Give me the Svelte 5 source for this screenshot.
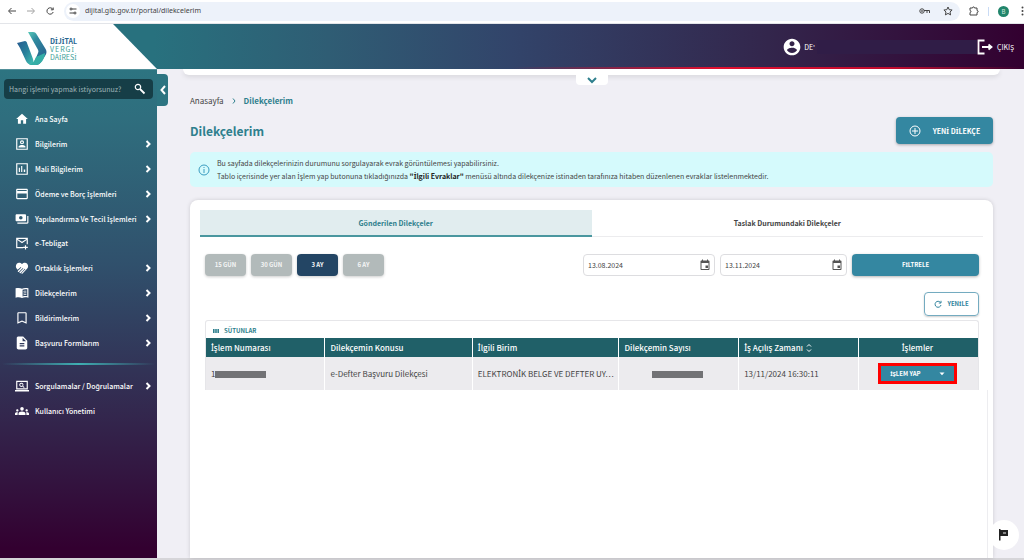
<script lang="ts">
  type Item = { label: string; icon: string; more?: boolean };

  const icons: Record<string, string> = {
    home: 'M10 20v-6h4v6h5v-8h3L12 3 2 12h3v8z',
    person: 'M2 2h20v20H2zM4 4v16h16V4zM12 5.500a3.500 3.500 0 1 1 0 7 3.500 3.500 0 0 1 0-7zM6 18v-1.500c0-2 4-3 6-3s6 1 6 3V18zM12 7.500a1.500 1.500 0 1 0 0 3 1.500 1.500 0 0 0 0-3z',
    chart: 'M2 2h20v20H2zM4 4v16h16V4zM6.500 10h2v7h-2zM10.500 7h2v10h-2zM15 13h2.500v4H15z',
    card: 'M20 3H4C2.900 3 2 3.900 2 5v14c0 1.100.9 2 2 2h16c1.100 0 2-.9 2-2V5c0-1.100-.9-2-2-2zm0 16H4v-8h16v8zm0-12H4V5h16v2z',
    cash: 'M19 14V6c0-1.100-.9-2-2-2H3c-1.100 0-2 .9-2 2v8c0 1.100.9 2 2 2h14c1.100 0 2-.9 2-2zm-9-1c-1.660 0-3-1.340-3-3s1.340-3 3-3 3 1.340 3 3-1.340 3-3 3zm13-6v11c0 1.100-.9 2-2 2H4v-2h17V7h2z',
    mail: 'M2 3h20v11h-2V7l-8 5.500L4 7v12h10v2H2zM4.500 5l7.500 5 7.500-5zM17 16h2v2.500h3v2h-3V23h-2v-2.500h-3v-2h3z',
    hands: 'M7 3c2 0 3.300.7 5 2.200C13.700 3.700 15 3 17 3c3 0 5.500 2.700 5.500 6 0 1.500-.5 2.800-1.500 4l-8 8.500c-.8.8-2 .5-2.300-.3l7-7-.8-.8-7.400 7.400c-.8.5-2-.2-2-1.300l6.800-6.800-.8-.8-7 7c-1 .3-2-.6-1.700-1.800l6-6-.8-.8L4.500 15C2.500 12.500 1.500 11.300 1.500 9c0-3.300 2.500-6 5.500-6z',
    book: 'M1 4c4-1 8-1 11 .7C15 3 19 3 23 4v16c-4-1-8-1-11 .5C9 19 5 19 1 20zM13 6.500v11.700c2.500-1 5.500-1 8-.6V5.700c-3-.5-6-.3-8 .8zM14.500 8.500c1.500-.5 3.500-.6 5-.4v1.500c-2-.2-3.500 0-5 .4zM14.500 11.500c1.500-.5 3.500-.6 5-.4v1.500c-2-.2-3.500 0-5 .4zM14.500 14.500c1.500-.5 3.500-.6 5-.4v1.500c-2-.2-3.500 0-5 .4z',
    bookmark: 'M18 2H6C4.900 2 4 2.900 4 4v18l8-3.500 8 3.500V4c0-1.100-.9-2-2-2zm0 17l-6-2.600L6 19V4h12v15z',
    file: 'M14 1H6C4.500 1 3 2 3 3.500v17C3 22 4.500 23 6 23h12c1.500 0 3-1 3-2.500V8l-7-7zm2 17H8v-2h8v2zm0-4H8v-2h8v2zm-3-5V3l6 6h-6z',
    search: 'M2 3h20v15H2zM4 5v11h16V5zM0 19h24v2.500H0zM11 6.500a3.500 3.500 0 0 1 3 5.300l2.500 2.400-1.200 1.200-2.500-2.500A3.500 3.500 0 1 1 11 6.500zM11 8a2 2 0 1 0 0 4 2 2 0 0 0 0-4z',
    group: 'M12 12.750c1.630 0 3.070.39 4.240.9 1.080.48 1.760 1.560 1.760 2.730V19H6v-2.610c0-1.180.68-2.260 1.760-2.730 1.170-.52 2.610-.91 4.240-.91zM4 13c1.100 0 2-.9 2-2s-.9-2-2-2-2 .9-2 2 .9 2 2 2zm1.130 1.100C3 13.800 0 14.500 0 16.430V19h4.500v-2.610c0-.83.23-1.610.63-2.290zM20 13c1.100 0 2-.9 2-2s-.9-2-2-2-2 .9-2 2 .9 2 2 2zm4 3.430c0-1.900-3-2.600-5.130-2.330.4.68.63 1.460.63 2.290V19H24v-2.570zM12 5c1.660 0 3 1.340 3 3s-1.340 3.500-3 3.500S9 9.660 9 8s1.340-3 3-3z',
    calendar: 'M18 13h-5v5h5v-5zM16 1v2H8V1H6v2H5c-1.110 0-2 .9-2 2v15c0 1.100.9 2 2 2h14c1.100 0 2-.9 2-2V5c0-1.100-.9-2-2-2h-1V1h-2zm3 19H5V8h14v12z',
  };

  const menu: Item[] = [
    { label: 'Ana Sayfa', icon: 'home' },
    { label: 'Bilgilerim', icon: 'person', more: true },
    { label: 'Mali Bilgilerim', icon: 'chart', more: true },
    { label: 'Ödeme ve Borç İşlemleri', icon: 'card', more: true },
    { label: 'Yapılandırma Ve Tecil İşlemleri', icon: 'cash', more: true },
    { label: 'e-Tebligat', icon: 'mail' },
    { label: 'Ortaklık İşlemleri', icon: 'hands', more: true },
    { label: 'Dilekçelerim', icon: 'book', more: true },
    { label: 'Bildirimlerim', icon: 'bookmark', more: true },
    { label: 'Başvuru Formlarım', icon: 'file', more: true },
  ];

  const tools: Item[] = [
    { label: 'Sorgulamalar / Doğrulamalar', icon: 'search', more: true },
    { label: 'Kullanıcı Yönetimi', icon: 'group' },
  ];

  const periods = ['15 GÜN', '30 GÜN', '3 AY', '6 AY'];
  let period = $state('3 AY');
  let tab = $state(0);
  let from = $state('13.08.2024');
  let to = $state('13.11.2024');
</script>

<!-- the CJK face has no dotted capital I, so that letter gets its own family -->
{#snippet tr(text: string)}<span>{#each text.split(/(İ)/) as part}{#if part === 'İ'}<span class="dotted">İ</span>{:else}{part}{/if}{/each}</span>{/snippet}

{#snippet links(items: Item[])}
  {#each items as item}
    <li>
      <a class="nav-link" href="#{item.icon}">
        <svg class="nav-icon" viewBox="0 0 24 24" aria-hidden="true"><path fill-rule="evenodd" d={icons[item.icon]} /></svg>
        {@render tr(item.label)}
        {#if item.more}
          <svg class="nav-more" viewBox="0 0 6 8" aria-hidden="true"><path d="M1.500 1l3 3-3 3" /></svg>
        {/if}
      </a>
    </li>
  {/each}
{/snippet}

<div class="page">
  <div class="browser">
    <button class="plain" aria-label="Geri">
      <svg class="line" width="10" height="10" viewBox="0 0 10 10"><path d="M9 5H2M4.500 2L1.500 5l3 3" /></svg>
    </button>
    <button class="plain dim" aria-label="İleri">
      <svg class="line" width="10" height="10" viewBox="0 0 10 10"><path d="M1 5h7M5.500 2l3 3-3 3" /></svg>
    </button>
    <button class="plain" aria-label="Yeniden yükle">
      <svg class="line" width="10" height="10" viewBox="0 0 10 10"><path d="M8 3.500A3.200 3.200 0 1 0 8.200 6M8.200 1.500v2.300H5.900" /></svg>
    </button>
    <div class="address">
      <span class="site">
        <svg class="line" width="8" height="8" viewBox="0 0 8 8"><path d="M3 2h4.500M.5 6H5" /><circle cx="2" cy="2" r="1" /><circle cx="6" cy="6" r="1" /></svg>
      </span>
      <input class="url" aria-label="Adres" value="dijital.gib.gov.tr/portal/dilekcelerim" />
      <svg class="line" width="12" height="8" viewBox="0 0 12 8"><circle cx="3" cy="4" r="2.200" /><circle cx="3" cy="4" r=".5" /><path d="M5 3.500h5.500v2.500M8 3.500V6" /></svg>
      <svg class="line star" width="10" height="10" viewBox="0 0 10 10"><path d="M5 1l1.200 2.700 2.900.3L7 6l.6 2.900L5 7.400 2.400 8.900 3 6 .9 4l2.900-.3z" /></svg>
    </div>
    <svg class="line" width="10" height="10" viewBox="0 0 10 10"><path d="M1 2h2.500c0-1.500 2-1.500 2 0H8v2.500c1.500 0 1.500 2 0 2V9H1V6.500c1.300 0 1.300-2 0-2z" /></svg>
    <span class="sep"></span>
    <span class="avatar">B</span>
    <svg width="3" height="10" viewBox="0 0 3 10" fill="#444"><circle cx="1.500" cy="1.500" r="1" /><circle cx="1.500" cy="5" r="1" /><circle cx="1.500" cy="8.500" r="1" /></svg>
  </div>

  <header class="top">
    <a class="brand" href="#home" aria-label="Dijital Vergi Dairesi">
      <svg width="30" height="34" viewBox="0 0 30 34" aria-hidden="true">
        <defs>
          <linearGradient id="wing" x1="0" y1="0" x2="1" y2="1">
            <stop offset="0" stop-color="#285b91" />
            <stop offset="0.5" stop-color="#28809b" />
            <stop offset="1" stop-color="#43c3b3" />
          </linearGradient>
          <linearGradient id="fold" x1="0" y1="0" x2="0.6" y2="1">
            <stop offset="0" stop-color="#58c9b8" />
            <stop offset="0.35" stop-color="#2f8a9f" />
            <stop offset="1" stop-color="#28608f" />
          </linearGradient>
        </defs>
        <path d="M11 1h5c2 0 3 1 4 3l8 13c2 3 2 5 0 8l-4 6c-1 2-3 3-5 3h-3l5-12c1-2 0-3-1-5z" fill="url(#fold)" />
        <path d="M0 12l8-2c1 0 2 1 2 2l6 16c1 3 0 5-1 6-3 0-5-2-6-4L3 17z" fill="url(#wing)" />
        <path d="M12 34c3-1 5-3 7-8l9-4c0 5-4 12-9 12z" fill="#35aea6" />
      </svg>
      <span class="brand-text"><b>{@render tr('DİJİTAL')}</b><span class="wide">{@render tr('VERGİ')}</span>{@render tr('DAİRESİ')}</span>
    </a>
    <div class="user">
      <svg width="20" height="20" viewBox="0 0 24 24" fill="#fff" aria-hidden="true"><path d="M12 2C6.480 2 2 6.480 2 12s4.480 10 10 10 10-4.480 10-10S17.520 2 12 2zm0 3c1.660 0 3 1.340 3 3s-1.340 3-3 3-3-1.340-3-3 1.340-3 3-3zm0 14.200c-2.500 0-4.710-1.280-6-3.220.03-1.990 4-3.080 6-3.080 1.990 0 5.970 1.090 6 3.080-1.290 1.940-3.500 3.220-6 3.220z" /></svg>
      <span>DE'</span>
      <span class="masked"></span>
    </div>
    <button class="logout">
      <svg width="16" height="16" viewBox="0 0 16 16" fill="none" stroke="#fff" stroke-width="1.800" aria-hidden="true"><path d="M7.500 1.500h-6v13h6M5 8h9M11.500 5.500L14.500 8l-3 2.500" /></svg>
      ÇIKIŞ
    </button>
  </header>

  <div class="body">
    <aside class="side">
      <label class="search">
        <input type="text" placeholder="Hangi işlemi yapmak istiyorsunuz?" aria-label="Ara" />
        <svg width="12" height="12" viewBox="0 0 12 12" fill="none" stroke="#fff" aria-hidden="true"><circle cx="4" cy="4" r="2.700" stroke-width="1.200" /><path d="M6 6l4.500 4.500" stroke-width="1.800" /></svg>
      </label>
      <button class="collapse" aria-label="Menüyü daralt">
        <svg width="6" height="10" viewBox="0 0 6 10"><path d="M5 1L1.500 5 5 9" /></svg>
      </button>
      <nav>
        <ul class="menu">{@render links(menu)}</ul>
        <hr />
        <ul class="menu tools">{@render links(tools)}</ul>
      </nav>
    </aside>

    <main>
      <div class="shelf">
        <button class="expand" aria-label="Genişlet">
          <svg width="12" height="8" viewBox="0 0 12 8"><path d="M2 2l4 4 4-4" /></svg>
        </button>
      </div>

      <div class="content">
        <div class="crumbs">
          <a href="#anasayfa">Anasayfa</a>
          <svg width="4" height="6" viewBox="0 0 4 6"><path d="M1 .5L3 3 1 5.500" /></svg>
          <b>Dilekçelerim</b>
        </div>

        <div class="heading">
          <h1>Dilekçelerim</h1>
          <button class="primary new">
            <svg width="12" height="12" viewBox="0 0 12 12" fill="none" stroke="#fff" aria-hidden="true"><circle cx="6" cy="6" r="5" /><path d="M6 3v6M3 6h6" /></svg>
            {@render tr('YENİ DİLEKÇE')}
          </button>
        </div>

        <div class="info">
          <svg width="12" height="12" viewBox="0 0 12 12" fill="none" stroke="#3a9cc0" aria-hidden="true"><circle cx="6" cy="6" r="5" /><path d="M6 5v4M6 3v1" /></svg>
          <p>
            Bu sayfada dilekçelerinizin durumunu sorgulayarak evrak görüntülemesi yapabilirsiniz.<br />
            Tablo içerisinde yer alan {@render tr('İşlem')} yap butonuna tıkladığınızda <b>{@render tr('"İlgili Evraklar"')}</b> menüsü altında dilekçenize istinaden tarafınıza hitaben düzenlenen evraklar listelenmektedir.
          </p>
        </div>

        <section class="card">
          <div class="tabs" role="tablist">
            <button role="tab" aria-selected={tab === 0} class:active={tab === 0} onclick={() => (tab = 0)}>Gönderilen Dilekçeler</button>
            <button role="tab" aria-selected={tab === 1} class:active={tab === 1} onclick={() => (tab = 1)}>Taslak Durumundaki Dilekçeler</button>
          </div>

          <div class="filters">
            <div class="periods">
              {#each periods as p}
                <button class="period" class:on={period === p} onclick={() => (period = p)}>{p}</button>
              {/each}
            </div>
            <div class="range">
              <label class="date">
                <input type="text" aria-label="Başlangıç tarihi" bind:value={from} />
                <svg width="12" height="12" viewBox="0 0 24 24" aria-hidden="true"><path fill-rule="evenodd" d={icons.calendar} /></svg>
              </label>
              <label class="date">
                <input type="text" aria-label="Bitiş tarihi" bind:value={to} />
                <svg width="12" height="12" viewBox="0 0 24 24" aria-hidden="true"><path fill-rule="evenodd" d={icons.calendar} /></svg>
              </label>
              <button class="primary apply">{@render tr('FİLTRELE')}</button>
            </div>
          </div>

          <button class="refresh">
            <svg width="8" height="8" viewBox="0 0 8 8" fill="none" stroke="#32849e" aria-hidden="true"><path d="M6.500 2.500A3 3 0 1 0 7 5M7 .8v2.200H4.800" /></svg>
            {@render tr('YENİLE')}
          </button>

          <div class="grid">
            <button class="columns">
              <svg width="6" height="4" viewBox="0 0 6 4" fill="#2e7f8d" aria-hidden="true"><path d="M0 0h1.600v4H0zM2.200 0h1.600v4H2.200zM4.400 0H6v4H4.400z" /></svg>
              SÜTUNLAR
            </button>
            <table>
              <colgroup>
                <col style="width: 15.400%" /><col style="width: 19.100%" /><col style="width: 19%" />
                <col style="width: 15.500%" /><col style="width: 15.500%" /><col style="width: 15.500%" />
              </colgroup>
              <thead>
                <tr>
                  <th>{@render tr('İşlem Numarası')}</th>
                  <th>Dilekçemin Konusu</th>
                  <th>{@render tr('İlgili Birim')}</th>
                  <th>Dilekçemin Sayısı</th>
                  <th>
                    {@render tr('İş Açılış Zamanı')}
                    <svg class="sort" width="6" height="8" viewBox="0 0 6 8" aria-hidden="true"><path d="M1 2.500l2-2 2 2M1 5.500l2 2 2-2" /></svg>
                  </th>
                  <th class="mid">{@render tr('İşlemler')}</th>
                </tr>
              </thead>
              <tbody>
                <tr>
                  <td>1<span class="redacted"></span></td>
                  <td>e-Defter Başvuru Dilekçesi</td>
                  <td>{@render tr('ELEKTRONİK BELGE VE DEFTER UY…')}</td>
                  <td class="mid"><span class="redacted"></span></td>
                  <td>13/11/2024 16:30:11</td>
                  <td class="mid">
                    <button class="action">
                      {@render tr('İŞLEM YAP')}
                      <svg width="6" height="4" viewBox="0 0 6 4" fill="#fff" aria-hidden="true"><path d="M.5.5h5L3 3.200z" /></svg>
                    </button>
                  </td>
                </tr>
              </tbody>
            </table>
          </div>
          <div class="rest"></div>
        </section>
      </div>
    </main>
  </div>

  <button class="help" aria-label="Geri bildirim">
    <svg width="10" height="12" viewBox="0 0 10 12" aria-hidden="true"><path d="M0 0h1.500v1H9v6H1.500v4.500H0z" fill="#222" /><path d="M4 3h3v2H4z" fill="#888" /></svg>
  </button>
</div>

<style>
  :global(body) {
    margin: 0;
    font-family: "Noto Sans CJK SC", "Noto Sans", sans-serif;
    font-size: 8px;
    line-height: 12px;
    color: #444;
  }

  * { box-sizing: border-box; }

  button, input { font: inherit; color: inherit; border: 0; margin: 0; padding: 0; background: none; outline: 0; }
  button { cursor: pointer; }
  a { color: inherit; text-decoration: none; }
  svg { flex-shrink: 0; }

  .dotted { font-family: "Noto Sans", sans-serif; line-height: 1; }

  .page {
    display: flex;
    flex-direction: column;
    min-height: 100vh;
    background: #f0eff5;
    border-bottom: 2px solid #d6d5d9;
  }

  /* Browser bar */
  .browser {
    display: flex;
    align-items: center;
    gap: 9px;
    height: 24px;
    padding: 0 0 1px 7px;
    background: #fff;
    border-bottom: 1px solid #e3e5e9;
  }

  .line { fill: none; stroke: #444; stroke-width: 1; }
  .plain { display: flex; }
  .dim { opacity: 0.5; }

  .address {
    flex: 1;
    display: flex;
    align-items: center;
    height: 19px;
    padding: 0 7px 0 2px;
    border-radius: 10px;
    background: #edf2fa;
  }

  .site {
    display: flex;
    align-items: center;
    justify-content: center;
    width: 14px;
    height: 14px;
    border-radius: 7px;
    background: #fff;
  }

  .url {
    flex: 1;
    min-width: 0;
    margin-left: 5px;
    font-family: "Noto Sans", sans-serif;
    font-size: 7px;
  }

  .star { margin-left: 12px; }
  .sep { width: 1px; height: 9px; background: #c9dbf5; }

  .avatar {
    width: 11px;
    height: 11px;
    margin-right: 3px;
    border-radius: 6px;
    background: #21856b;
    color: #cfe8df;
    font-size: 6px;
    line-height: 11px;
    text-align: center;
  }

  /* Header */
  .top {
    position: relative;
    display: flex;
    align-items: center;
    height: 45px;
    padding-right: 10px;
    background: linear-gradient(90deg, #28717e 15%, #2f5d74 32%, #32446a 50%, #33264c 75%, #330030 100%);
    color: #fff;
    font-size: 7px;
  }

  .top::after {
    content: '';
    position: absolute;
    right: 0;
    bottom: 0;
    left: 50%;
    height: 2px;
    background: linear-gradient(90deg, transparent, #e0102f 40%, #c00c2e 75%, transparent);
  }

  .brand {
    display: flex;
    align-items: center;
    gap: 3px;
    width: 157px;
    height: 45px;
    padding: 3px 0 0 17px;
    background: #fff;
    clip-path: polygon(0 0, 72% 0, 100% 100%, 0 100%);
  }

  .brand-text {
    display: flex;
    flex-direction: column;
    padding-top: 2px;
    line-height: 8px;
    color: #3aa197;
  }

  .brand-text b { color: #28658f; }
  .wide { letter-spacing: 1px; }

  .user {
    display: flex;
    align-items: center;
    gap: 2px;
    margin-left: auto;
  }

  .masked { width: 160px; height: 14px; background: #301d47; }
  .logout { display: flex; align-items: center; gap: 4px; }

  .body { flex: 1; display: flex; }

  /* Sidebar */
  .side {
    position: relative;
    width: 157px;
    flex-shrink: 0;
    padding-top: 9px;
    border-top: 1px solid #52909a;
    background: linear-gradient(180deg, #2d7481 0%, #2f6e7e 10%, #30506c 40%, #33254c 72%, #330030 98%);
    color: #fff;
    font-size: 7px;
  }

  .search {
    display: flex;
    align-items: center;
    height: 20px;
    margin: 0 4px;
    padding: 0 7px 0 5px;
    border-radius: 4px;
    background: #163e47;
  }

  .search input { flex: 1; min-width: 0; }
  .search input::placeholder { color: #9fb5b9; opacity: 1; }

  .collapse {
    position: absolute;
    top: 4px;
    left: 100%;
    display: flex;
    align-items: center;
    justify-content: center;
    width: 11px;
    height: 32px;
    border-radius: 0 4px 4px 0;
    background: #2d7481;
  }

  .collapse path { fill: none; stroke: #fff; stroke-width: 2; }

  .menu {
    display: grid;
    grid-template-columns: minmax(0, 1fr);
    grid-auto-rows: 1fr;
    height: 248px;
    margin: 8px 0 0;
    padding: 0;
    list-style: none;
    font-weight: 500;
  }

  .menu.tools { height: 50px; }

  .nav-link {
    display: flex;
    align-items: center;
    gap: 6px;
    height: 100%;
    padding: 0 6px 0 15px;
    white-space: nowrap;
  }

  .nav-icon { width: 14px; height: 14px; fill: #fff; }
  .nav-more { width: 6px; height: 8px; margin-left: auto; }
  .nav-more path { fill: none; stroke: #fff; stroke-width: 2; }

  hr {
    height: 2px;
    margin: 8px 2px 0;
    border: 0;
    background: linear-gradient(90deg, transparent, #3fb0b3 50%, transparent);
  }

  /* Main */
  main {
    flex: 1;
    min-width: 0;
    display: flex;
    flex-direction: column;
  }

  .shelf {
    display: flex;
    justify-content: center;
    height: 6px;
    margin: 0 24px 0 26px;
    border-radius: 0 0 6px 6px;
    background: #fff;
    box-shadow: 0 2px 5px #0000001a;
  }

  .expand {
    display: flex;
    align-items: center;
    justify-content: center;
    width: 32px;
    height: 16px;
    padding-top: 5px;
    border-radius: 0 0 4px 4px;
    background: #fff;
  }

  .expand path { fill: none; stroke: #2e7f8d; stroke-width: 2; }

  .content {
    flex: 1;
    display: flex;
    flex-direction: column;
    padding: 20px 31px 0 33px;
  }

  .crumbs { display: flex; align-items: center; gap: 8px; }
  .crumbs path { fill: none; stroke: #2e7f8d; }
  .crumbs b { color: #2e7f8d; }

  .heading {
    display: flex;
    align-items: center;
    justify-content: space-between;
    margin-top: 10px;
  }

  h1 {
    margin: 0;
    font-size: 12px;
    line-height: 18px;
    color: #2e7f8d;
  }

  .primary {
    border-radius: 4px;
    background: #3487a1;
    box-shadow: 0 1px 3px #0000004d;
    color: #fff;
    font-weight: 700;
    font-size: 7px;
  }

  .new {
    display: flex;
    align-items: center;
    justify-content: center;
    gap: 12px;
    width: 97px;
    height: 27px;
  }

  .info {
    display: flex;
    align-items: center;
    gap: 7px;
    min-height: 35px;
    margin-top: 8px;
    padding: 0 8px;
    border-radius: 5px;
    background: #d5fafc;
    font-size: 7px;
    line-height: 13px;
  }

  .info p { margin: 0; }
  .info b { color: #222; }

  .card {
    flex: 1;
    display: flex;
    flex-direction: column;
    margin-top: 13px;
    padding: 10px 10px 0;
    border-radius: 8px 8px 0 0;
    background: #fff;
    box-shadow: 0 0 4px #00000026;
  }

  .tabs {
    display: grid;
    grid-template-columns: 1fr 1fr;
    border-bottom: 1px solid #ececee;
  }

  .tabs button {
    height: 27px;
    margin-bottom: -1px;
    border-bottom: 2px solid transparent;
    font-weight: 700;
    font-size: 7px;
  }

  .tabs .active {
    border-color: #4a979f;
    background: #e1edef;
    color: #2e7f8d;
  }

  .filters {
    display: flex;
    justify-content: space-between;
    margin: 17px 4px 0 5px;
  }

  .periods, .range { display: flex; gap: 5px; }

  .period {
    width: 41px;
    height: 22px;
    border-radius: 4px;
    background: #b2baba;
    box-shadow: 0 1px 3px #00000033;
    color: #f5f5f5;
    font-weight: 700;
    font-size: 6px;
  }

  .period.on { background: #234564; }

  .date {
    display: flex;
    align-items: center;
    width: 127px;
    padding: 0 3px 0 4px;
    border: 1px solid #dddde0;
    border-radius: 4px;
    font-size: 7px;
  }

  .date:first-child { width: 132px; }
  .date input { flex: 1; min-width: 0; }
  .date svg { fill: #555; }
  .apply { width: 127px; font-size: 6px; }

  .refresh {
    display: flex;
    align-items: center;
    justify-content: center;
    gap: 5px;
    align-self: flex-end;
    width: 55px;
    height: 24px;
    margin: 16px 4px 0 0;
    border: 1px solid #74abc0;
    border-radius: 4px;
    box-shadow: 0 1px 2px #00000033;
    color: #32849e;
    font-weight: 700;
    font-size: 6px;
  }

  .grid {
    margin: 4px 4px 0 5px;
    border: 1px solid #e6e6e9;
    border-bottom: 0;
    border-radius: 3px 3px 0 0;
  }

  .columns {
    display: flex;
    align-items: center;
    gap: 5px;
    height: 17px;
    padding: 2px 0 0 7px;
    color: #2e7f8d;
    font-weight: 700;
    font-size: 6px;
  }

  table {
    width: 100%;
    table-layout: fixed;
    border-collapse: collapse;
  }

  th, td {
    padding: 0 0 0 5px;
    border-left: 1px solid #fff;
    text-align: left;
    white-space: nowrap;
  }

  th:first-child, td:first-child { border-left: 0; }

  th {
    height: 19px;
    background: #206068;
    color: #fff;
    font-weight: 500;
  }

  td { height: 33px; background: #ecebee; }

  .mid { padding: 0 2px 0 0; text-align: center; }
  .sort { margin-left: 1px; vertical-align: -1px; }
  .sort path { fill: none; stroke: #fff; }

  .redacted {
    display: inline-block;
    width: 51px;
    height: 7px;
    background: #727275;
    vertical-align: -1px;
  }

  .action {
    display: inline-flex;
    align-items: center;
    justify-content: center;
    gap: 18px;
    width: 79px;
    height: 21px;
    border: 3px solid #f00;
    background: #3487a1;
    color: #fff;
    font-weight: 700;
    font-size: 6px;
    vertical-align: middle;
  }

  .rest {
    flex: 1;
    margin-right: -5px;
    border-right: 1px solid #ededf0;
  }

  .help {
    position: fixed;
    right: 5px;
    bottom: 10px;
    display: flex;
    align-items: center;
    justify-content: center;
    width: 30px;
    height: 30px;
    border-radius: 15px;
    background: #fff;
  }
</style>
